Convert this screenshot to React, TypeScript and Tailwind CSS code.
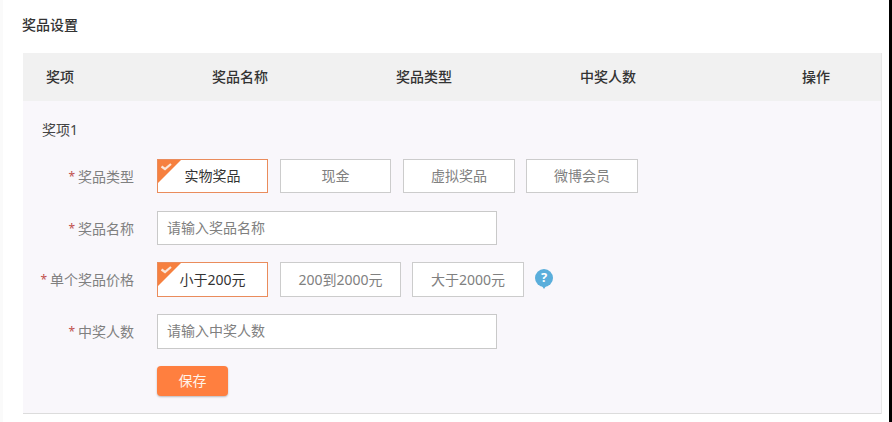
function Choice({ label, width, active }: { label: string; width: string; active?: boolean }) {
  return (
    <button
      type="button"
      className={`relative flex h-full items-center justify-center overflow-hidden border bg-white text-sm ${width} ${
        active ? "border-[#ea8c5c] text-[#333]" : "border-[#cccccc] text-[#808080]"
      }`}
    >
      {active && (
        <svg className="absolute left-0 top-0" width="23" height="23" viewBox="0 0 23 23" fill="none">
          <path d="M0 0H23L0 23Z" fill="#f6803f" />
          <path d="M3.5 6.5L7 9L13 4" stroke="#fbe6d8" strokeWidth="2.2" />
        </svg>
      )}
      {label}
    </button>
  );
}

function Label({ text }: { text: string }) {
  return (
    <div className="w-[111px] shrink-0 pt-px text-right text-sm text-[#808080]">
      <span className="mr-[3px] align-[1px] text-xs text-[#c0504d]">*</span>
      {text}
    </div>
  );
}

function Field({ placeholder }: { placeholder: string }) {
  return (
    <input
      readOnly
      placeholder={placeholder}
      className="ml-[23px] h-full w-[340px] border border-[#c9c9c9] bg-white px-[9px] pb-[2px] text-sm outline-none placeholder:text-[#808080]"
    />
  );
}

export default function App() {
  return (
    <div className="flex h-[422px] w-full overflow-hidden bg-white font-['Noto_Sans','Noto_Sans_CJK_SC',sans-serif]">
      <div className="w-[3px] shrink-0 bg-[#fafafa]" />
      <div className="min-w-0 flex-1">
        <h2 className="ml-[19px] mt-[15px] h-[20px] text-sm leading-[20px] font-medium text-[#333]">奖品设置</h2>
        <div className="ml-[20px] mt-[18px] w-[859px] border-r border-[#e8e8e8]">
          <div className="flex h-[48px] items-center bg-[#f1f1f1] pl-[23px] text-sm font-medium text-[#333]">
            <div className="w-[166px]">奖项</div>
            <div className="w-[184px]">奖品名称</div>
            <div className="w-[184px]">奖品类型</div>
            <div className="w-[222px]">中奖人数</div>
            <div>操作</div>
          </div>
          <div className="h-[313px] border-b border-[#dcdcdc] bg-[#f9f7fb]">
            <div className="ml-[19px] pt-[19px] text-sm leading-[19px] text-[#444]">奖项1</div>
            <div className="mt-[20px] flex h-[34px] items-center">
              <Label text="奖品类型" />
              <div className="ml-[23px] flex h-full">
                <Choice label="实物奖品" width="w-[111px]" active />
                <div className="w-3" />
                <Choice label="现金" width="w-[111px]" />
                <div className="w-3" />
                <Choice label="虚拟奖品" width="w-[112px]" />
                <div className="w-[11px]" />
                <Choice label="微博会员" width="w-[112px]" />
              </div>
            </div>
            <div className="mt-[18px] flex h-[34px] items-center">
              <Label text="奖品名称" />
              <Field placeholder="请输入奖品名称" />
            </div>
            <div className="mt-[17px] flex h-[35px] items-center">
              <Label text="单个奖品价格" />
              <div className="ml-[23px] flex h-full items-center">
                <Choice label="小于200元" width="w-[111px]" active />
                <div className="w-3" />
                <Choice label="200到2000元" width="w-[121px]" />
                <div className="w-[11px]" />
                <Choice label="大于2000元" width="w-[112px]" />
                <span className="relative -mt-[4px] ml-[11px] flex h-[18px] w-[18px] items-center justify-center rounded-full bg-[#5aaedb] text-[13px] font-bold text-white">
                  ?
                  <svg className="absolute -bottom-[2px] left-[7px]" width="4" height="3" viewBox="0 0 4 3">
                    <path d="M0 0H4L2 3Z" fill="#5aaedb" />
                  </svg>
                </span>
              </div>
            </div>
            <div className="mt-[17px] flex h-[35px] items-center">
              <Label text="中奖人数" />
              <Field placeholder="请输入中奖人数" />
            </div>
            <button
              type="button"
              className="ml-[134px] mt-[17px] block h-[30px] w-[71px] rounded-sm bg-[#ff7f3f] text-sm text-[#fff3ea] shadow-[0_1px_2px_rgba(0,0,0,0.25)]"
            >
              保存
            </button>
          </div>
        </div>
      </div>
      <div className="w-[3px] shrink-0 bg-black" />
    </div>
  );
}
